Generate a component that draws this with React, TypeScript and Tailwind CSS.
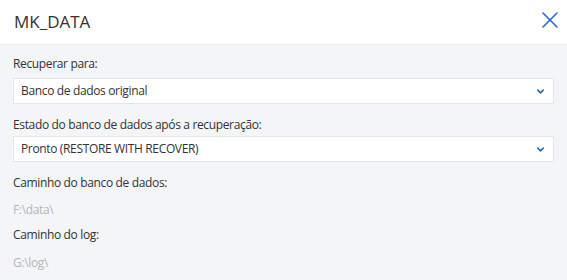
import React from "react";
import { ChevronDown, X } from "lucide-react";

const SelectBox: React.FC<{ value: string }> = ({ value }) => (
  <div className="flex h-[26px] items-center justify-between border border-[#e2e5e9] bg-white pl-[7px] pr-[7px] text-[#333]">
    <span>{value}</span>
    <ChevronDown size={11} strokeWidth={3.2} className="text-[#2c5fa8]" />
  </div>
);

export default function App() {
  return (
    <div
      className="h-[280px] w-[567px] overflow-hidden bg-[#f4f5f7]"
      style={{ fontFamily: '"Open Sans", sans-serif' }}
    >
      <div className="flex h-[45px] items-center justify-between border-b border-[#e8eaee] bg-white pl-[14px] pr-[3px]">
        <h1 className="-mt-[1px] text-[17px] text-[#333]">MK_DATA</h1>
        <X size={28} strokeWidth={1.4} className="-mt-[4px] text-[#2a6dd0]" />
      </div>
      <div className="px-[13px] pt-[9px] text-[12px] tracking-[-0.35px] text-[#333]">
        <div className="h-[20px] leading-[20px]">Recuperar para:</div>
        <div className="mt-[4px]">
          <SelectBox value="Banco de dados original" />
        </div>
        <div className="mt-[11px] h-[20px] leading-[20px]">
          Estado do banco de dados após a recuperação:
        </div>
        <div className="mt-[1px]">
          <SelectBox value="Pronto (RESTORE WITH RECOVER)" />
        </div>
        <div className="mt-[11px] h-[20px] leading-[20px]">Caminho do banco de dados:</div>
        <div className="mt-[7px] h-[20px] leading-[20px] text-[#b4b6b9]">F:\data\</div>
        <div className="mt-[5px] h-[20px] leading-[20px]">Caminho do log:</div>
        <div className="mt-[8px] h-[20px] leading-[20px] text-[#b4b6b9]">G:\log\</div>
      </div>
    </div>
  );
}
